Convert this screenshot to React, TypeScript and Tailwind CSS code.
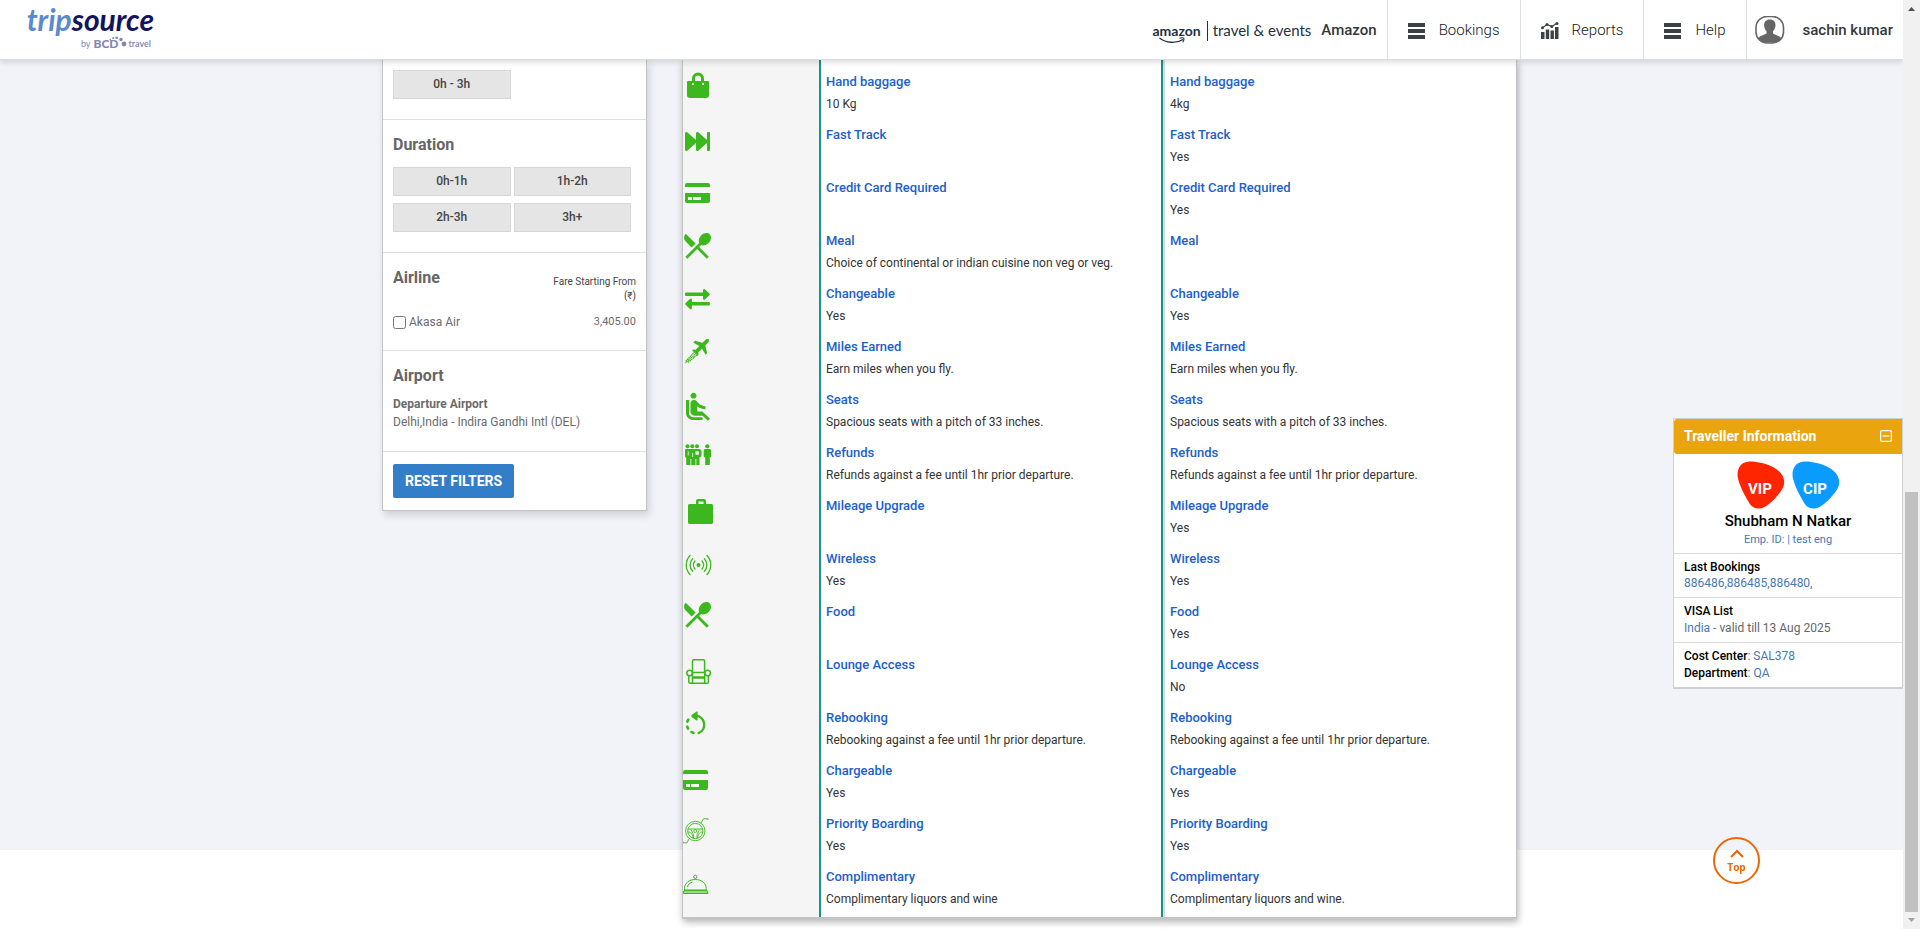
import React from "react";

const GREEN = "#3cb81e";

const Utensils = ({ y }: { y: number }) => (
  <path
    transform={`translate(-2.8 ${y - 4.3}) scale(1.41)`}
    d="M8.1 13.34l2.83-2.83L3.91 3.5c-1.56 1.56-1.56 4.09 0 5.66l4.19 4.18zm6.78-1.81c1.53.71 3.68.21 5.27-1.38 1.91-1.91 2.28-4.65.81-6.12-1.46-1.46-4.2-1.1-6.12.81-1.59 1.59-2.09 3.74-1.38 5.27L3.7 19.87l1.41 1.41L12 14.41l6.88 6.88 1.41-1.41L13.41 13l1.47-1.47z"
  />
);

const CardShape = ({ x, y }: { x: number; y: number }) => (
  <path
    transform={`translate(${x} ${y})`}
    fillRule="evenodd"
    d="M2 0h21a2 2 0 0 1 2 2v2H0V2a2 2 0 0 1 2-2zM0 10h25v8a2 2 0 0 1-2 2H2a2 2 0 0 1-2-2zM3 14v3h4v-3zM8 14v3h8v-3z"
  />
);

const icons: Record<string, React.ReactNode> = {
  bag: (
    <>
      <path d="M10.5 9V6.500a4.500 4.500 0 0 1 9 0V9" fill="none" stroke={GREEN} strokeWidth="3" />
      <path
        fillRule="evenodd"
        d="M5 9h20a1 1 0 0 1 1 1v13a3 3 0 0 1-3 3H7a3 3 0 0 1-3-3V10a1 1 0 0 1 1-1zM10 11a1 1 0 1 0 0 2 1 1 0 0 0 0-2zM20 11a1 1 0 1 0 0 2 1 1 0 0 0 0-2z"
      />
    </>
  ),
  forward: (
    <path d="M2 8.500C2 7 3.500 6.500 4.500 7.500L13 15V8.500C13 7 14.500 6.500 15.500 7.500L24 15V8c0-.6.4-1 1-1h1c.6 0 1 .4 1 1v17c0 .6-.4 1-1 1h-1c-.6 0-1-.4-1-1v-7l-8.500 7.500c-1 1-2.500.5-2.500-1V18l-8.500 7.500c-1 1-2.500.5-2.500-1z" />
  ),
  card: <CardShape x={2} y={5} />,
  meal: <Utensils y={2} />,
  exchange: (
    <path d="M3 8.500h17V6.500c0-1.800 1.200-2 2.200-1l4.200 4c.6.600.6 1.200 0 1.800l-4.200 4c-1 1-2.200.8-2.200-1v-2.300H3c-1.400 0-1.400-3.500 0-3.500zM26 18H9v-2c0-1.800-1.200-2-2.200-1l-4.200 4c-.6.600-.6 1.200 0 1.800l4.200 4c1 1 2.200.8 2.200-1V21.500h17c1.400 0 1.400-3.500 0-3.500z" />
  ),
  plane: (
    <>
      <path d="M25.700 2.200c-1-.6-2.700 0-3.700 1l-2.500 2.500-7.500-1.900-1.800 1.700 6.100 3.500-3.600 3.800-2.500-.2L9 13.800l3.400 1.900 1.900 3.300 1.200-1.200-.2-2.600 3.700-3.500 3.600 6 1.600-1.700-1.900-7.500L24.800 6c1-1 1.500-2.900.9-3.800z" />
      <path d="M12 14.500 2.500 24.500M13.500 16 2.500 26M14 18 5 25.500" fill="none" stroke={GREEN} strokeWidth="1.200" strokeDasharray="1.600 .4" />
    </>
  ),
  seat: (
    <path
      transform="translate(-3 0) scale(1.5 1.430)"
      d="M7.590 5.410c-.78-.78-.78-2.050 0-2.830.78-.78 2.050-.78 2.830 0 .78.78.78 2.050 0 2.830-.79.79-2.050.79-2.830 0zM6 16V7H4v9c0 2.760 2.240 5 5 5h6v-2H9c-1.660 0-3-1.340-3-3zm14 4.070L14.930 15H11.500v-3.680c1.400 1.150 3.600 2.160 5.500 2.160v-2.160c-1.660.02-3.610-.87-4.670-2.040l-1.400-1.550c-.19-.21-.43-.38-.69-.5-.29-.14-.62-.23-.96-.23h-.03C8.010 7 7 8.010 7 9.250V15c0 1.660 1.340 3 3 3h5.070l3.500 3.500L20 20.070z"
    />
  ),
  people: (
    <>
      <circle cx="4.500" cy="3.300" r="2" />
      <circle cx="9.300" cy="3.300" r="2" />
      <circle cx="14" cy="3.300" r="2" />
      <circle cx="24.300" cy="3.300" r="2.100" />
      <path
        fillRule="evenodd"
        d="M3 6h13c1.500 0 2.500 1.300 2.500 3v3c0 1.500-.8 2.500-2 2.500V22h-3.200v-6h-.8v6H8.300v-6h-.8v6H3.200v-7C2.400 14.500 2 13.500 2 12.500V7c0-.6.4-1 1-1zM12.500 8.200v3.600h2.800c1 0 1-3.600 0-3.600zM4.800 8.500v4h.8v-4zM9.300 10v4h.8v-4z"
      />
      <path d="M22 6h4.600c1 0 1.600.9 1.600 2v5c0 .9-.6 1.400-1.400 1.400V22h-4.600v-7.600c-.9 0-1.500-.5-1.500-1.400V8c0-1.100.6-2 1.300-2z" />
    </>
  ),
  briefcase: (
    <path
      fillRule="evenodd"
      d="M13 8V5.200C13 4 13.800 3 15 3h6c1.200 0 2 1 2 2.200V8h5.500c.8 0 1.500.7 1.500 1.500v17c0 .8-.7 1.500-1.500 1.500h-22c-.8 0-1.500-.7-1.500-1.500v-17C5 8.700 5.700 8 6.500 8zm2.500 0h5V5.500h-5z"
    />
  ),
  wireless: (
    <>
      <circle cx="15.500" cy="16" r="2" />
      <path
        fill="none"
        stroke={GREEN}
        strokeWidth="1.300"
        strokeLinecap="round"
        d="M12 12a6 6 0 0 0 0 8M19 12a6 6 0 0 1 0 8M9.600 9.800a9 9 0 0 0 0 12.400M21.400 9.800a9 9 0 0 1 0 12.400M7 6.500a14 14 0 0 0 0 19M24 6.500a14 14 0 0 1 0 19"
      />
    </>
  ),
  food: <Utensils y={0} />,
  lounge: (
    <g fill="none" stroke={GREEN} strokeWidth="1.500">
      <path d="M9.500 17V6.200c0-.8.6-1.400 1.400-1.400h9.300c.8 0 1.400.6 1.400 1.400V17" />
      <path d="M9 17.500h13.200M9.500 22h12.200M9.500 17.500V22M21.700 17.500V22M9.500 22v6M21.700 22v6M9.500 23h12.200" />
      <path d="M5.800 20.800V27c0 .8.500 1.300 1.300 1.300h17c.8 0 1.300-.5 1.300-1.300v-6.200" />
      <circle cx="6.600" cy="18" r="2.800" />
      <circle cx="24.600" cy="18" r="2.800" />
    </g>
  ),
  rebook: (
    <>
      <path d="M13 7.800a9 9 0 0 1 2.600 17.300" fill="none" stroke={GREEN} strokeWidth="2.400" strokeLinecap="round" />
      <path d="M9.300 7.300 14 4v8l-4.700-3.300c-.5-.4-.5-1 0-1.400z" stroke={GREEN} strokeWidth="1.200" strokeLinejoin="round" />
      <path d="M4.300 13.700l1-2M4.200 18.600l.8 2M8.500 24l2 .9" stroke={GREEN} strokeWidth="2.600" strokeLinecap="round" />
    </>
  ),
  charge: <CardShape x={0} y={9} />,
  wheel: (
    <g fill="none" stroke={GREEN} strokeWidth=".9">
      <circle cx="12.300" cy="17" r="9.700" />
      <circle cx="12.300" cy="17" r="7.600" />
      <circle cx="12.300" cy="17" r="1.500" />
      <path d="M5 15h15M5 18c3 0 4.500 2 4.800 6M19.600 18c-3 0-4.500 2-4.800 6M8 15.500l2.500 5v4M16.600 15.500l-2.500 5v4" />
      <path d="M18 9l2.500-4.200H25V6M6 25l-2 3.800H0V27.500" />
    </g>
  ),
  dish: (
    <g fill="none" stroke={GREEN} strokeWidth="1">
      <circle cx="12.300" cy="9.800" r="1.600" />
      <path d="M1.500 23V21.500C1.500 16 6.300 12.500 12.300 12.500S23.200 16 23.200 21.500V23zM4.500 20c.5-2.500 2.500-4.300 5-5" />
      <path d="M1 23.500H24L25 26.500H0z" />
      <path d="M0 25h25" />
    </g>
  ),
};

const rows: [string, string, string, string][] = [
  ["bag", "Hand baggage", "10 Kg", "4kg"],
  ["forward", "Fast Track", "", "Yes"],
  ["card", "Credit Card Required", "", "Yes"],
  ["meal", "Meal", "Choice of continental or indian cuisine non veg or veg.", ""],
  ["exchange", "Changeable", "Yes", "Yes"],
  ["plane", "Miles Earned", "Earn miles when you fly.", "Earn miles when you fly."],
  ["seat", "Seats", "Spacious seats with a pitch of 33 inches.", "Spacious seats with a pitch of 33 inches."],
  ["people", "Refunds", "Refunds against a fee until 1hr prior departure.", "Refunds against a fee until 1hr prior departure."],
  ["briefcase", "Mileage Upgrade", "", "Yes"],
  ["wireless", "Wireless", "Yes", "Yes"],
  ["food", "Food", "", "Yes"],
  ["lounge", "Lounge Access", "", "No"],
  ["rebook", "Rebooking", "Rebooking against a fee until 1hr prior departure.", "Rebooking against a fee until 1hr prior departure."],
  ["charge", "Chargeable", "Yes", "Yes"],
  ["wheel", "Priority Boarding", "Yes", "Yes"],
  ["dish", "Complimentary", "Complimentary liquors and wine", "Complimentary liquors and wine."],
];

function BarsIcon() {
  return (
    <svg width="17" height="16" viewBox="0 0 17 16" fill="#3b4245" aria-hidden="true">
      <path d="M0 0h17v4H0zM0 6h17v4H0zM0 12h17v4H0z" />
    </svg>
  );
}

function ReportsIcon() {
  return (
    <svg width="18" height="17" viewBox="0 0 18 17" fill="#3b4245" aria-hidden="true">
      <path d="M0 10h3.500v7H0zM4.800 7.500h3.400V17H4.800zM9.500 8.500h3.400V17H9.500zM14 5h3.500v12H14z" />
      <path d="M1.500 5.800 6 2.600l4.800 1.800L16 1.200" fill="none" stroke="#3b4245" strokeWidth="1.200" />
      <circle cx="1.500" cy="5.800" r="1.500" />
      <circle cx="6" cy="2.600" r="1.500" />
      <circle cx="10.800" cy="4.400" r="1.500" />
      <circle cx="16" cy="1.500" r="1.500" />
    </svg>
  );
}

function Header() {
  const item = "flex items-center border-l border-[#dfe1e4] pt-0.5";
  return (
    <header className="relative z-20 flex h-[60px] shrink-0 items-stretch justify-between border-b border-[#dcdde0] bg-white shadow-[0_2px_6px_rgba(0,0,0,0.15)]">
      <a href="#home" className="flex w-[154px] flex-col items-end pt-px font-['Lato',sans-serif]">
        <span className="text-[30px] leading-9 font-bold text-[#14135f] italic">
          <span className="text-[#5a8acb]">trip</span>source
        </span>
        <span className="flex items-center pr-[3px] text-[9px] leading-[14px] text-[#8486b0]">
          <span className="mr-[3px]">by</span>
          <span className="text-[12px] font-black">BCD</span>
          <svg width="8" height="12" viewBox="0 0 8 12" fill="#8486b0" className="mr-0.5 overflow-visible" aria-hidden="true">
            <circle cx="5" cy="6" r="2.400" />
            <circle cx="2" cy="1.500" r="1.700" />
            <circle cx="-2.300" cy="-.2" r="1.300" />
            <circle cx="-5.700" cy="0" r="1.100" />
            <circle cx="-8.700" cy="1.600" r=".8" />
          </svg>
          <span className="font-semibold">travel</span>
        </span>
      </a>
      <nav className="flex items-stretch text-[15px] text-[#33373a]">
        <div className="flex items-center pt-0.5 pr-[10px]">
          <div className="flex items-center text-[#232f3e]">
            <span className="relative font-['Lato',sans-serif] text-[14px] leading-5 font-bold">
              amazon
              <svg className="absolute top-4 left-[7px]" width="28" height="8" viewBox="0 0 28 8" fill="none" stroke="#232f3e" aria-hidden="true">
                <path d="M.5 1C7 6 17 7 24 2.500" strokeWidth="1.400" />
                <path d="M20.500 1.200c2-.5 3.500-.6 4.300 0 .5.800 0 2.300-1 4" strokeWidth="1.100" />
              </svg>
            </span>
            <span className="mr-[5px] ml-[6px] h-5 w-px bg-[#232f3e]" />
            <span className="font-['Lato',sans-serif] text-[15px]">travel &amp; events</span>
          </div>
          <span className="ml-[10px] font-medium">Amazon</span>
        </div>
        <a href="#bookings" className={`${item} gap-[14px] px-5 font-light text-[#15181a]`}>
          <BarsIcon />
          Bookings
        </a>
        <a href="#reports" className={`${item} gap-[13px] px-5 font-light text-[#15181a]`}>
          <ReportsIcon />
          Reports
        </a>
        <a href="#help" className={`${item} gap-[14px] px-5 font-light text-[#15181a]`}>
          <BarsIcon />
          Help
        </a>
        <a href="#profile" className={`${item} pr-[10px] pl-2 font-medium`}>
          <svg width="30" height="30" viewBox="0 0 30 30" aria-hidden="true" className="mr-[18px]">
            <rect x="1" y=".5" width="27.500" height="26.500" rx="11" fill="#fff" stroke="#666" strokeWidth="1.600" />
            <path d="M14.800 3.500c3.800 0 5.700 2.400 5.700 5.500 0 2.400-1 4.800-2.500 6.200v2c0 1 6.500 2.200 8.200 4.800-1.600 3-4.200 4.400-7.200 4.400h-8.500c-3 0-5.600-1.400-7.200-4.400 1.700-2.600 8.200-3.800 8.200-4.800v-2C10 13.800 9.100 11.400 9.100 9c0-3.100 1.900-5.500 5.700-5.500z" fill="#666" />
          </svg>
          sachin kumar
        </a>
      </nav>
    </header>
  );
}

function FilterButton({ children }: { children: React.ReactNode }) {
  return (
    <button className="h-[29px] border border-[#d6d6d6] bg-[#e5e5e5] pb-0.5 text-[12px] leading-4 font-medium text-[#444]">
      {children}
    </button>
  );
}

function Filters() {
  const heading = "text-[16px] leading-5 font-bold text-[#666]";
  return (
    <aside className="w-[265px] shrink-0 border border-t-0 border-[#c2c3c5] bg-white text-[12px] text-[#6b6b6b] shadow-[2px_4px_8px_rgba(0,0,0,0.15)]">
      <section className="border-b border-[#dedfe1] px-[10px] pt-[10px] pb-5">
        <div className="mr-[5px] grid grid-cols-2 gap-[3px]">
          <FilterButton>0h - 3h</FilterButton>
        </div>
      </section>
      <section className="border-b border-[#dedfe1] px-[10px] pt-[15px] pb-5">
        <h2 className={heading}>Duration</h2>
        <div className="mt-3 mr-[5px] grid grid-cols-2 gap-x-[3px] gap-y-[7px]">
          <FilterButton>0h-1h</FilterButton>
          <FilterButton>1h-2h</FilterButton>
          <FilterButton>2h-3h</FilterButton>
          <FilterButton>3h+</FilterButton>
        </div>
      </section>
      <section className="border-b border-[#dedfe1] px-[10px] pt-[15px] pb-[18px]">
        <div className="flex items-start justify-between">
          <h2 className={heading}>Airline</h2>
          <p className="mt-[7px] text-right text-[10px] leading-[14px] text-[#444]">
            Fare Starting From
            <br />
            (₹)
          </p>
        </div>
        <div className="mt-[9px] flex items-center justify-between leading-5">
          <label className="flex items-center gap-[3px]">
            <input type="checkbox" className="size-[13px]" />
            Akasa Air
          </label>
          <span className="text-[11px]">3,405.00</span>
        </div>
      </section>
      <section className="border-b border-[#dedfe1] px-[10px] pt-[15px] pb-5">
        <h2 className={heading}>Airport</h2>
        <h3 className="mt-[9px] leading-[18px] font-bold">Departure Airport</h3>
        <p className="leading-[18px]">Delhi,India - Indira Gandhi Intl (DEL)</p>
      </section>
      <div className="px-[10px] pt-3 pb-3">
        <button className="block h-[34px] rounded-[2px] bg-[#337ec9] px-3 text-[14px] font-bold text-white">RESET FILTERS</button>
      </div>
    </aside>
  );
}

function FareCell({ title, value }: { title: string; value: string }) {
  return (
    <>
      <div className="text-[13px] leading-5 font-medium text-[#1c60cc]">{title}</div>
      <div className="text-[12px] leading-6 text-[#333]">{value}</div>
    </>
  );
}

function Comparison() {
  return (
    <div className="min-w-0 flex-1 self-start border border-t-0 border-b-2 border-[#c2c3c5] bg-white shadow-[1px_3px_7px_rgba(0,0,0,0.3)]">
      <table className="w-full table-fixed border-separate border-spacing-0 text-left">
        <colgroup>
          <col className="w-[138px]" />
          <col className="w-[342px]" />
          <col />
        </colgroup>
        <tbody>
          <tr className="h-3">
            <td className="border-r-2 border-[#14958a] bg-[#f5f5f5]" />
            <td className="border-r-2 border-[#14958a]" />
            <td className="shadow-[inset_2px_0_0_#d9dadc]" />
          </tr>
          {rows.map(([icon, title, first, second]) => (
            <tr key={title} className="h-[53px] align-top last:h-[50px]">
              <td className="border-r-2 border-[#14958a] bg-[#f5f5f5]">
                <svg width="34" height="34" viewBox="0 0 34 34" fill={GREEN} className="block" aria-hidden="true">
                  {icons[icon]}
                </svg>
              </td>
              <td className="border-r-2 border-[#14958a] pl-[5px]">
                <FareCell title={title} value={first} />
              </td>
              <td className="pl-[7px] shadow-[inset_2px_0_0_#d9dadc]">
                <FareCell title={title} value={second} />
              </td>
            </tr>
          ))}
        </tbody>
      </table>
    </div>
  );
}

function Badge({ label, fill }: { label: string; fill: string }) {
  return (
    <svg width="48" height="48" viewBox="0 0 48 48" aria-label={label} role="img">
      <path d="M11 .7C17 0 33 2.500 40.500 9c8 6.500 8.500 14 3.500 21-4 6-11 13-17 16.300-5 2.500-11.500 1.500-14.500-3.800C8 35 2 24 .6 15.500 0 7.500 3.500 1.500 11 .7z" fill={fill} />
      <text x="23" y="33" textAnchor="middle" fill="#fff" fontSize="15" fontWeight="700" fontFamily="Roboto, sans-serif">
        {label}
      </text>
    </svg>
  );
}

function TravellerPanel() {
  return (
    <aside className="fixed top-[418px] right-[17px] z-10 w-[230px] border border-b-2 border-[#cfd0d3] bg-white text-[12px] leading-4 text-[#666]">
      <h2 className="flex h-[35px] items-center justify-between rounded-l-[3px] bg-[#e9a40e] px-[10px] pb-0.5 text-[14px] font-bold text-white">
        Traveller Information
        <button aria-label="Collapse">
          <svg width="12" height="12" viewBox="0 0 12 12" fill="none" stroke="#fff" className="block">
            <rect x=".6" y=".6" width="10.800" height="10.800" rx="1.500" strokeWidth="1.200" />
            <path d="M2.500 6h7" strokeWidth="1.200" />
          </svg>
        </button>
      </h2>
      <div className="border-b border-[#d9dadc] pt-[7px] pb-[6px] text-center">
        <div className="flex justify-center gap-[7px]">
          <Badge label="VIP" fill="#fe2500" />
          <Badge label="CIP" fill="#0a9bff" />
        </div>
        <div className="text-[15px] leading-6 font-medium text-black">Shubham N Natkar</div>
        <div className="text-[11px] leading-[14px] text-[#4679b2]">Emp. ID: | test eng</div>
      </div>
      <div className="border-b border-[#d9dadc] px-[10px] pt-[5px] pb-[6px]">
        <div className="font-medium text-black">Last Bookings</div>
        <div className="text-[#4679b2]">886486,886485,886480,</div>
      </div>
      <div className="border-b border-[#d9dadc] px-[10px] py-[5px] leading-[17px]">
        <div className="font-medium text-black">VISA List</div>
        <div>
          <span className="text-[#4679b2]">India -</span> valid till 13 Aug 2025
        </div>
      </div>
      <div className="px-[10px] py-[5px] leading-[17px] text-[#4679b2]">
        <div>
          <span className="font-medium text-black">Cost Center</span>: SAL378
        </div>
        <div>
          <span className="font-medium text-black">Department</span>: QA
        </div>
      </div>
    </aside>
  );
}

function ScrollRail() {
  return (
    <div className="fixed inset-y-0 right-0 z-30 flex w-[17px] flex-col items-center bg-[#f1f1f1]" aria-hidden="true">
      <svg width="17" height="17" viewBox="0 0 17 17" className="shrink-0">
        <path d="M5 11h7L8.500 7z" fill="#505050" />
      </svg>
      <div className="grow-[475]" />
      <div className="w-[13px] grow-[420] bg-[#c1c1c1]" />
      <svg width="17" height="17" viewBox="0 0 17 17" className="shrink-0">
        <path d="M5 6h7l-3.500 4z" fill="#a3a3a3" />
      </svg>
    </div>
  );
}

export default function App() {
  return (
    <div className="min-h-screen bg-white pr-[17px] font-['Roboto',sans-serif]">
      <Header />
      <main className="h-[790px] bg-[#f2f3f8]">
        <div className="mx-auto flex max-w-[1139px] items-start gap-[35px] pr-1">
          <Filters />
          <Comparison />
        </div>
      </main>
      <TravellerPanel />
      <a
        href="#top"
        className="fixed right-[160px] bottom-[45px] flex size-[47px] flex-col items-center justify-center gap-[3px] rounded-full border-2 border-[#ec670a] font-['Open_Sans',sans-serif] text-[10px] leading-3 font-bold text-[#ec670a]"
      >
        <svg width="14" height="9" viewBox="0 0 14 9" fill="none" stroke="#ec670a" strokeWidth="2.200" aria-hidden="true">
          <path d="M1 8l6-6 6 6" />
        </svg>
        Top
      </a>
      <ScrollRail />
    </div>
  );
}
